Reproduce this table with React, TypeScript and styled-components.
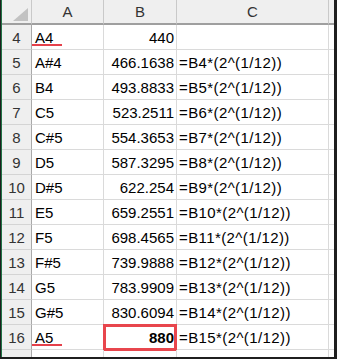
import React from "react";
import styled, { createGlobalStyle, css } from "styled-components";

const GlobalStyle = createGlobalStyle`
  html, body {
    margin: 0;
    padding: 0;
    background: #1f1f1f;
  }
`;

type Row = {
  n: number;
  note: string;
  value: string;
  formula: string;
  marked?: boolean;
  boxed?: boolean;
};

const rows: Row[] = [
  { n: 4, note: "A4", value: "440", formula: "", marked: true },
  { n: 5, note: "A#4", value: "466.1638", formula: "=B4*(2^(1/12))" },
  { n: 6, note: "B4", value: "493.8833", formula: "=B5*(2^(1/12))" },
  { n: 7, note: "C5", value: "523.2511", formula: "=B6*(2^(1/12))" },
  { n: 8, note: "C#5", value: "554.3653", formula: "=B7*(2^(1/12))" },
  { n: 9, note: "D5", value: "587.3295", formula: "=B8*(2^(1/12))" },
  { n: 10, note: "D#5", value: "622.254", formula: "=B9*(2^(1/12))" },
  { n: 11, note: "E5", value: "659.2551", formula: "=B10*(2^(1/12))" },
  { n: 12, note: "F5", value: "698.4565", formula: "=B11*(2^(1/12))" },
  { n: 13, note: "F#5", value: "739.9888", formula: "=B12*(2^(1/12))" },
  { n: 14, note: "G5", value: "783.9909", formula: "=B13*(2^(1/12))" },
  { n: 15, note: "G#5", value: "830.6094", formula: "=B14*(2^(1/12))" },
  { n: 16, note: "A5", value: "880", formula: "=B15*(2^(1/12))", marked: true, boxed: true },
];

export default function App() {
  return (
    <>
      <GlobalStyle />
      <Frame>
        <Sheet>
          <Corner>
            <svg width="15" height="13" viewBox="0 0 15 13">
              <polygon points="15,0 15,13 0,13" fill="#c2c2c2" />
            </svg>
          </Corner>
          <ColHead>A</ColHead>
          <ColHead>B</ColHead>
          <ColHead>C</ColHead>
          <ColHead />
          {rows.map((r) => (
            <React.Fragment key={r.n}>
              <RowHead>{r.n}</RowHead>
              <Cell $marked={r.marked}>{r.note}</Cell>
              <Cell $align="right" $bold={r.boxed} $boxed={r.boxed}>
                {r.value}
              </Cell>
              <Cell $pad={2} $spread>
                {r.formula}
              </Cell>
              <Cell />
            </React.Fragment>
          ))}
          <RowHead />
          <Cell />
          <Cell />
          <Cell />
          <Cell />
        </Sheet>
      </Frame>
    </>
  );
}

const Frame = styled.div`
  width: 337px;
  height: 359px;
  box-sizing: border-box;
  padding: 0 3px 2px 1px;
  background: #1f1f1f;
  display: flex;
`;

const Sheet = styled.div`
  flex: 1;
  overflow: hidden;
  background: #ffffff;
  border-left: 1px solid #217346;
  display: grid;
  grid-template-columns: 30px 72px 73px 152px 1fr;
  grid-auto-rows: 25px;
  font-family: "Liberation Sans", Arial, sans-serif;
  font-size: 15px;
  color: #000;
`;

const headBase = css`
  box-sizing: border-box;
  background: #efefef;
  color: #333;
  display: flex;
  align-items: center;
  justify-content: center;
`;

const Corner = styled.div`
  ${headBase};
  border-right: 1px solid #c9c9c9;
  border-bottom: 2px solid #9f9f9f;
  align-items: flex-end;
  justify-content: flex-end;
  padding: 0 3px 2px 0;
`;

const ColHead = styled.div`
  ${headBase};
  border-right: 1px solid #c9c9c9;
  border-bottom: 2px solid #9f9f9f;
  padding-bottom: 1px;
`;

const RowHead = styled.div`
  ${headBase};
  border-right: 1px solid #a9a9a9;
  border-bottom: 1px solid #d4d4d4;
`;

const Cell = styled.div<{
  $align?: "left" | "right";
  $bold?: boolean;
  $boxed?: boolean;
  $marked?: boolean;
  $pad?: number;
  $spread?: boolean;
}>`
  position: relative;
  box-sizing: border-box;
  border-right: 1px solid #dadada;
  border-bottom: 1px solid #dadada;
  display: flex;
  align-items: center;
  justify-content: ${(p) => (p.$align === "right" ? "flex-end" : "flex-start")};
  padding: 0 2px 0 ${(p) => p.$pad ?? 3}px;
  font-weight: ${(p) => (p.$bold ? 700 : 400)};
  letter-spacing: ${(p) => (p.$spread ? "0.4px" : "normal")};
  white-space: nowrap;

  ${(p) =>
    p.$marked &&
    css`
      &::after {
        content: "";
        position: absolute;
        left: 0;
        bottom: 3px;
        width: 30px;
        height: 2px;
        background: #e5414b;
      }
    `}

  ${(p) =>
    p.$boxed &&
    css`
      &::before {
        content: "";
        position: absolute;
        top: -1px;
        left: -1px;
        right: -1px;
        bottom: -2px;
        border: 3px solid #e8464d;
      }
    `}
`;
